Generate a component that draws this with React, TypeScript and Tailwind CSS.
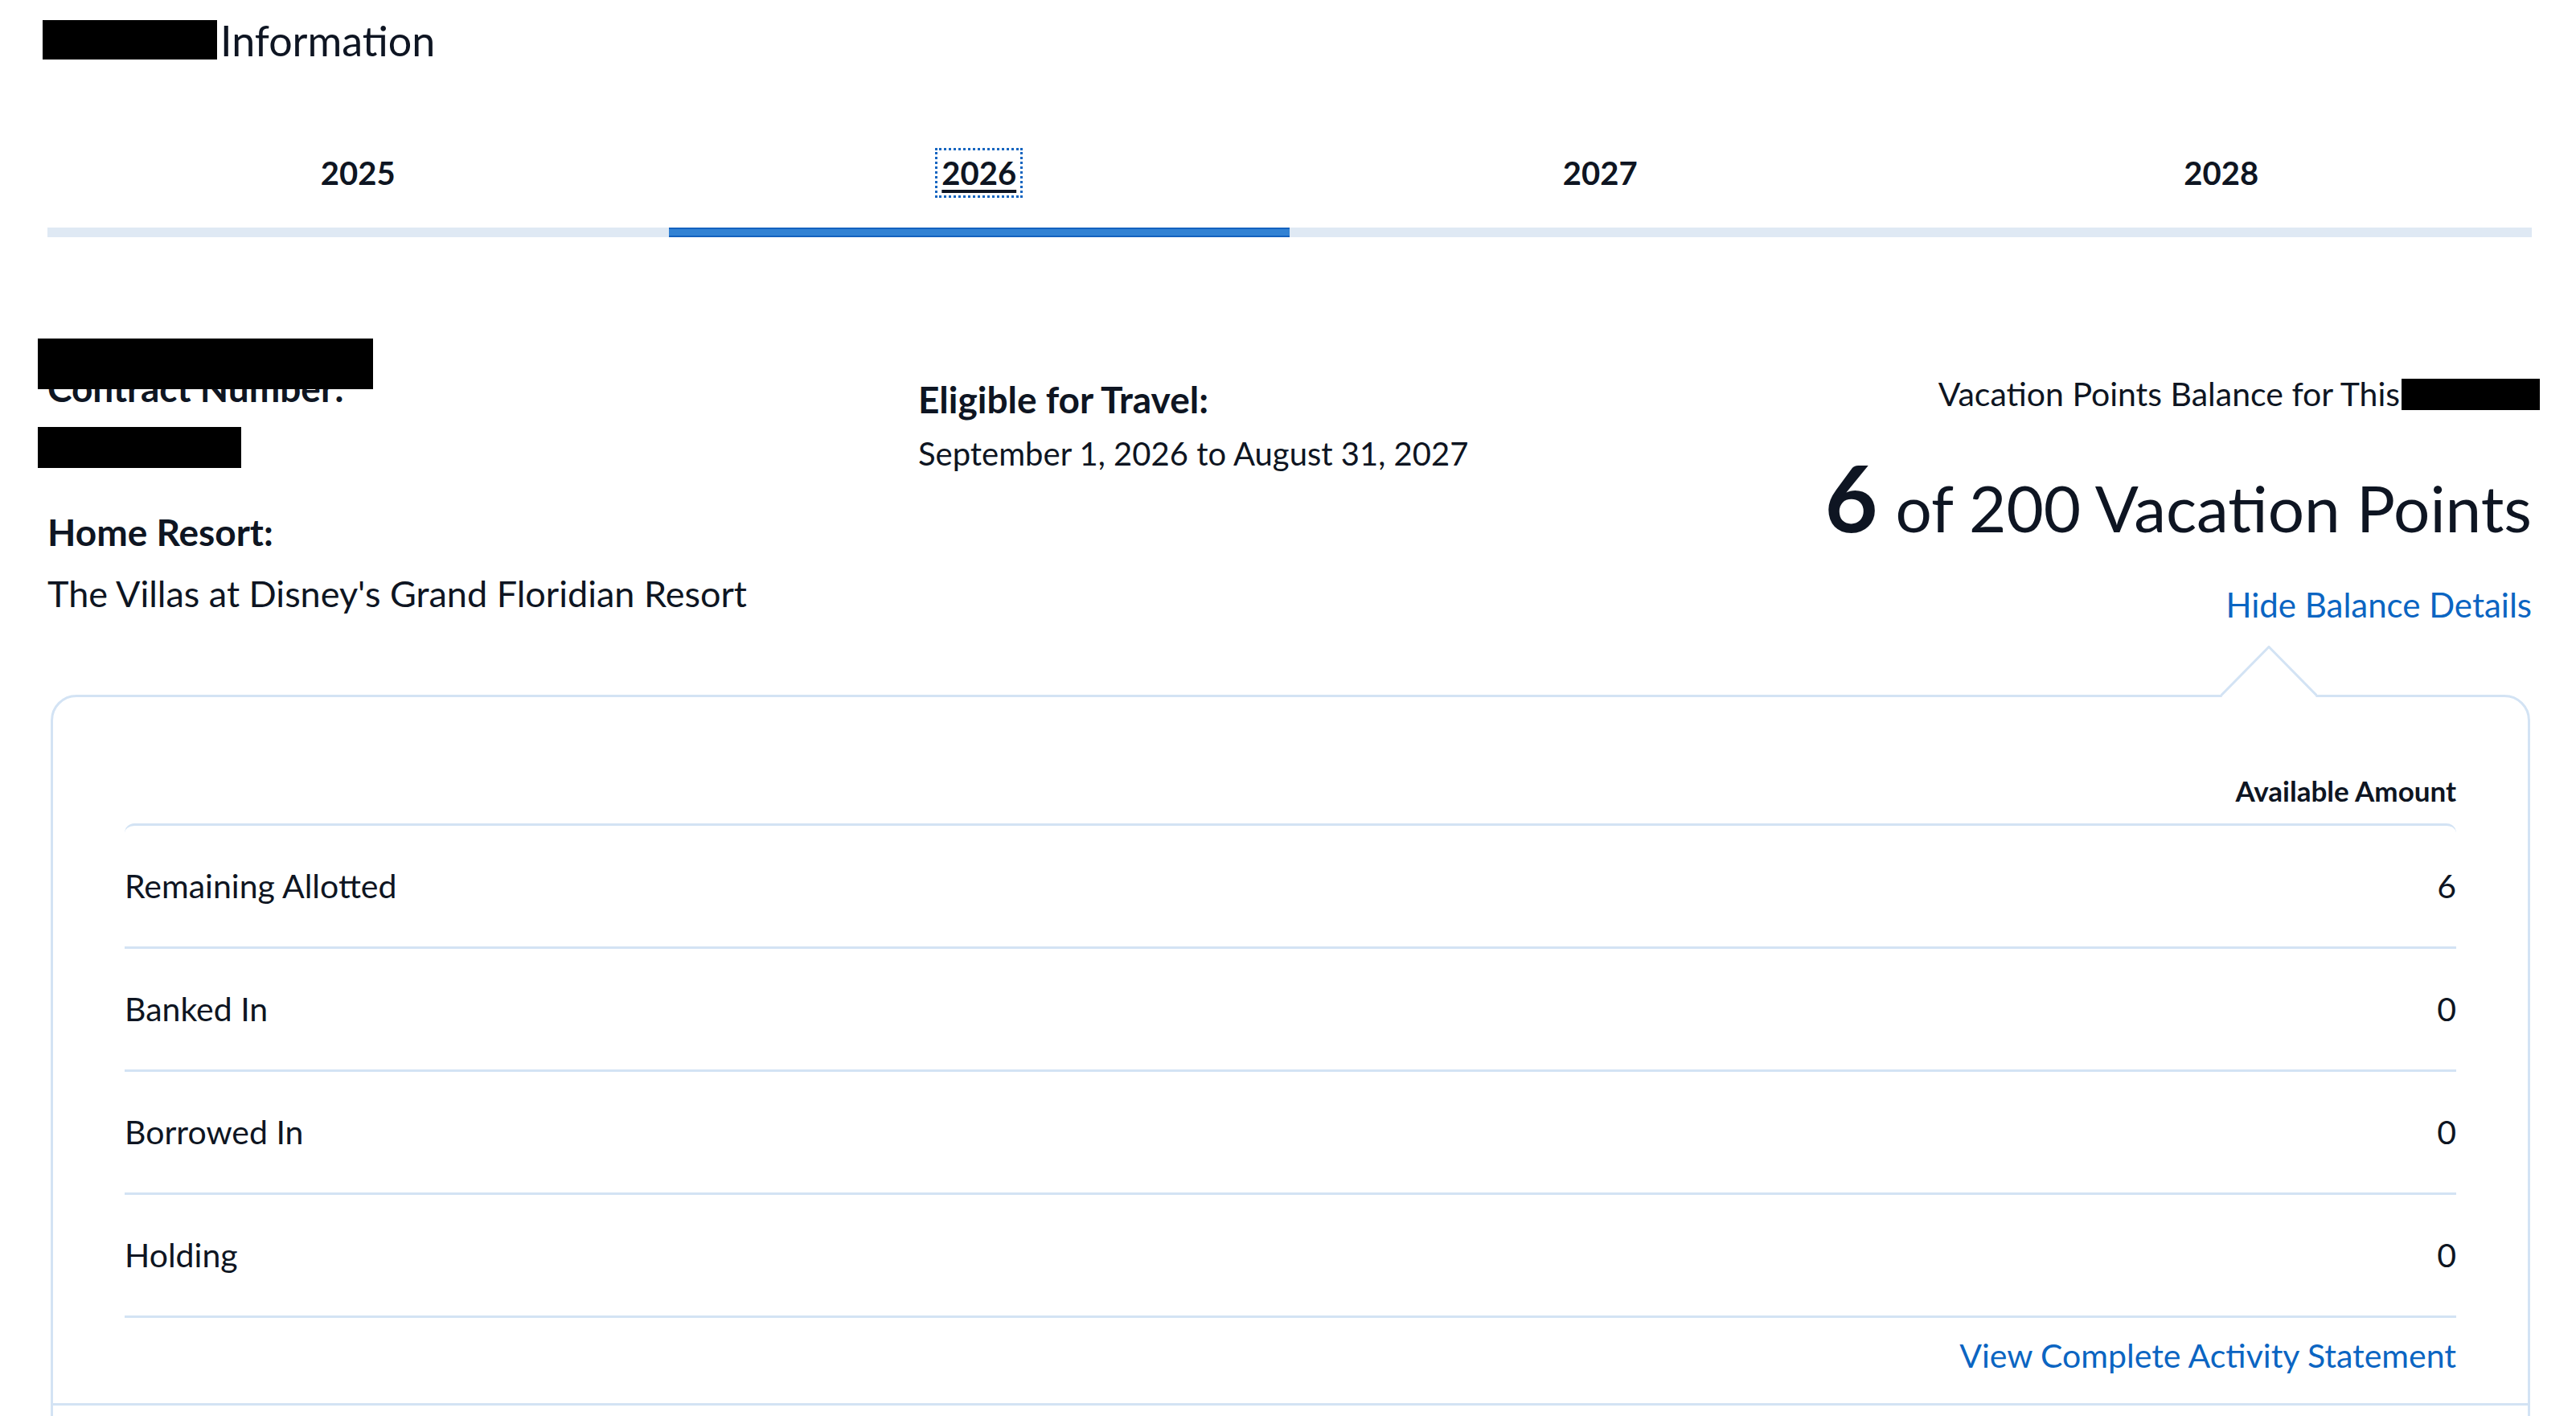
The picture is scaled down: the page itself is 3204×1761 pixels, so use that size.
import React from 'react';

const years = ['2025', '2026', '2027', '2028'];
const activeYear = '2026';

const balanceRows = [
  { label: 'Remaining Allotted', value: '6' },
  { label: 'Banked In', value: '0' },
  { label: 'Borrowed In', value: '0' },
  { label: 'Holding', value: '0' },
];

const YearTabs: React.FC = () => (
  <div className="mt-[113px] grid grid-cols-4">
    {years.map((year) => {
      const active = year === activeYear;
      return (
        <div key={year} className="flex flex-col items-center">
          <span
            className={`flex h-[56px] items-center px-[5px] text-[40px] font-bold leading-none ${
              active ? 'underline decoration-[4px] underline-offset-[6px] outline-3 outline-dotted outline-[#1565c0]' : ''
            }`}
          >
            {year}
          </span>
          <div
            className={`mt-[40px] h-[12px] w-full ${
              active ? 'border-y-2 border-[#1462bf] bg-[#3282d4]' : 'bg-[#dfe9f4]'
            }`}
          />
        </div>
      );
    })}
  </div>
);

// caret that points up at the "Hide Balance Details" link
const Caret: React.FC = () => (
  <svg className="absolute -top-[64px] right-[262px]" width="120" height="64" viewBox="0 0 120 64">
    <rect x="1.5" y="59" width="117" height="6" fill="#ffffff" />
    <polyline points="0,62.5 60,1.5 120,62.5" fill="#ffffff" stroke="#d3e3f4" strokeWidth="3" />
  </svg>
);

export default function App() {
  return (
    <div className="min-h-screen bg-white pl-[59px] pr-[55px] font-[Lato,'Liberation_Sans',sans-serif] text-[#0e1522]">
      {/* heading */}
      <div className="-ml-[6px] mt-[25px] flex h-[49px] items-center">
        <div className="h-[49px] w-[217px] bg-black" />
        <h1 className="ml-[4px] text-[52px] font-normal leading-none">Information</h1>
      </div>

      <YearTabs />

      {/* contract info */}
      <div className="mt-[160px] flex items-start">
        <div className="w-[1083px]">
          <div className="relative text-[46px] font-bold leading-[56px]">
            Contract Number:
            <div className="absolute -left-[12px] -top-[34px] h-[63px] w-[417px] bg-black" />
          </div>
          <div className="-ml-[12px] mt-[20px] h-[51px] w-[253px] bg-black" />
          <div className="mt-[52px] text-[46px] font-bold leading-[56px]">Home Resort:</div>
          <div className="mt-[20px] text-[45px] leading-[56px]">The Villas at Disney's Grand Floridian Resort</div>
        </div>

        <div className="flex-1">
          <div className="mt-[14px] text-[46px] font-bold leading-[56px]">Eligible for Travel:</div>
          <div className="mt-[14px] text-[40px] leading-[50px]">September 1, 2026 to August 31, 2027</div>
        </div>

        <div className="flex flex-col items-end">
          <div className="mt-[10px] flex items-center text-[41px] leading-[50px]">
            <span>Vacation Points Balance for This</span>
            <span className="-mr-[10px] ml-[2px] inline-block h-[39px] w-[172px] bg-black" />
          </div>
          <div className="mt-[46px] flex items-baseline leading-none">
            <span className="text-[114px] font-bold">6</span>
            <span className="ml-[22px] text-[80px]">of 200 Vacation Points</span>
          </div>
          <a className="mt-[50px] text-[42px] leading-[54px] text-[#0b65c2]">Hide Balance Details</a>
        </div>
      </div>

      {/* balance details */}
      <div className="relative ml-[4px] mr-[2px] mt-[85px] rounded-[32px] border-[3px] border-[#d3e3f4] px-[89px] pt-[95px]">
        <Caret />
        <div className="flex justify-end text-[35px] font-bold leading-[42px]">Available Amount</div>
        <div className="mt-[20px] rounded-t-[12px] border-t-[3px] border-[#d3e3f4]">
          {balanceRows.map((row) => (
            <div
              key={row.label}
              className="flex h-[153px] items-center justify-between border-b-[3px] border-[#d3e3f4] text-[41px]"
            >
              <span>{row.label}</span>
              <span>{row.value}</span>
            </div>
          ))}
        </div>
        <div className="mt-[22px] flex justify-end text-[41px] leading-[50px] text-[#0b65c2]">
          <a>View Complete Activity Statement</a>
        </div>
        <div className="-mx-[89px] mt-[34px] border-t-[3px] border-[#d3e3f4]" />
        <div className="h-[300px]" />
      </div>
    </div>
  );
}
